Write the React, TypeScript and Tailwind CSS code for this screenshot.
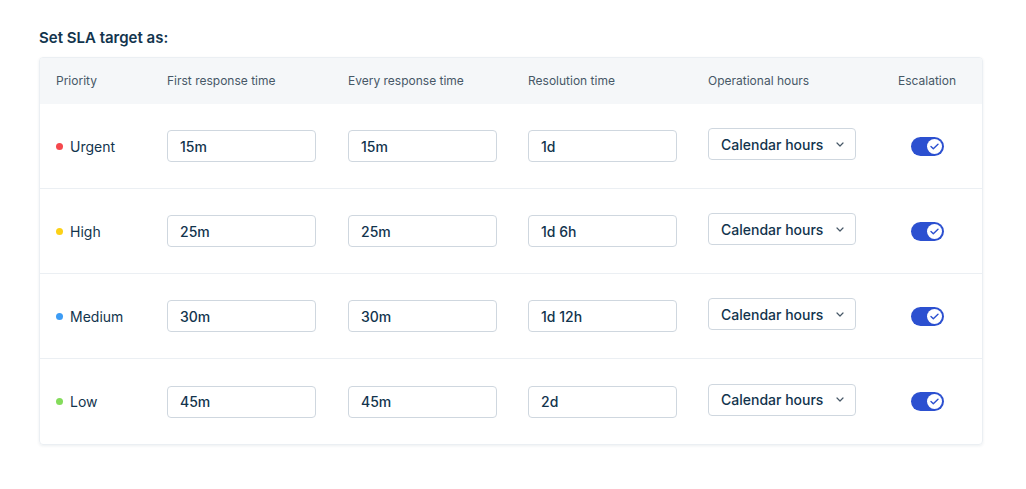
import React from "react";

const rows = [
  { name: "Urgent", color: "#f5484d", first: "15m", every: "15m", res: "1d" },
  { name: "High", color: "#fcd117", first: "25m", every: "25m", res: "1d 6h" },
  { name: "Medium", color: "#3d9cf5", first: "30m", every: "30m", res: "1d 12h" },
  { name: "Low", color: "#84dc5b", first: "45m", every: "45m", res: "2d" },
];

function Field({ value }: { value: string }) {
  return (
    <div className="w-[149px] h-[32px] rounded-[4px] border border-[#cfd7df] bg-white flex items-center pl-[12px] text-[14px] font-medium text-[#12344d]">
      {value}
    </div>
  );
}

function Select() {
  return (
    <div className="w-[148px] h-[32px] mb-[4px] rounded-[4px] border border-[#cfd7df] bg-white flex items-center justify-between pl-[12px] pr-[11px] text-[14px] font-medium text-[#12344d]">
      <span>Calendar hours</span>
      <svg width="8" height="5" viewBox="0 0 8 5" fill="none">
        <path d="M1 1l3 3 3-3" stroke="#475867" strokeWidth="1.2" strokeLinecap="round" strokeLinejoin="round" />
      </svg>
    </div>
  );
}

function Toggle() {
  return (
    <div className="w-[33px] h-[19px] rounded-full bg-[#2c50d0] flex items-center justify-end pr-[2px]">
      <div className="w-[15px] h-[15px] rounded-full bg-white flex items-center justify-center">
        <svg width="9" height="7" viewBox="0 0 9 7" fill="none">
          <path d="M1 3.6l2.3 2.2L8 1.2" stroke="#2c50d0" strokeWidth="1.4" strokeLinecap="round" strokeLinejoin="round" />
        </svg>
      </div>
    </div>
  );
}

export default function App() {
  const grid = "grid grid-cols-[111px_181px_180px_180px_180px_1fr] px-[16px] items-center";
  return (
    <div className="w-[1026px] h-[489px] bg-white px-[39px] pt-[28px]" style={{ fontFamily: "Inter, 'Noto Sans', sans-serif" }}>
      <h2 className="text-[15px] font-semibold text-[#12344d] leading-[20px] mb-[9px]">Set SLA target as:</h2>
      <div className="w-[944px] rounded-[4px] border border-[#ebeff3] shadow-[0_1px_3px_rgba(18,52,77,0.08)] overflow-hidden">
        <div className={`${grid} h-[46px] bg-[#f5f7f9] text-[12px] text-[#475867]`}>
          <div>Priority</div>
          <div>First response time</div>
          <div>Every response time</div>
          <div>Resolution time</div>
          <div>Operational hours</div>
          <div className="text-center">Escalation</div>
        </div>
        {rows.map((r, i) => (
          <div key={r.name} className={`${grid} h-[85px] ${i < rows.length - 1 ? "border-b border-[#ebeff3]" : ""}`}>
            <div className="flex items-center gap-[7px] text-[14px] text-[#12344d]">
              <span className="w-[7px] h-[7px] rounded-full" style={{ backgroundColor: r.color }} />
              {r.name}
            </div>
            <Field value={r.first} />
            <Field value={r.every} />
            <Field value={r.res} />
            <Select />
            <div className="flex justify-center">
              <Toggle />
            </div>
          </div>
        ))}
      </div>
    </div>
  );
}
